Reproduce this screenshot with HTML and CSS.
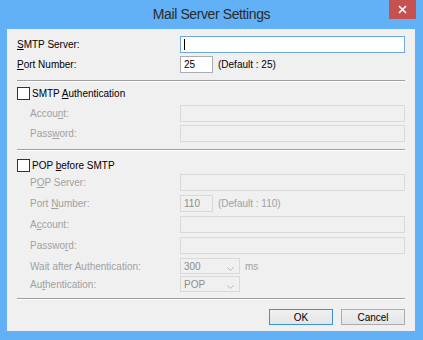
FILE: index.html
```html
<!DOCTYPE html>
<html lang="en">
<head>
    <meta charset="UTF-8">
    <title>Mail Server Settings</title>
    <link rel="stylesheet" href="styles.css">
</head>
<body>
    <div id="window">
        <div class="titlebar">
            <span class="title">Mail Server Settings</span>
            <span class="close">
                <svg width="9" height="9" viewBox="0 0 9 9"><path d="M1 1L8 8M8 1L1 8" stroke="#fff" stroke-width="1.6"/></svg>
            </span>
        </div>

        <div class="client">
            <div class="row first">
                <label><u>S</u>MTP Server:</label>
                <div class="box focus"><span class="caret"></span></div>
            </div>
            <div class="row tight">
                <label><u>P</u>ort Number:</label>
                <div class="inline">
                    <div class="box port">25</div>
                    <span class="hint">(Default : 25)</span>
                </div>
            </div>

            <div class="sep"></div>

            <div class="check-row">
                <span class="checkbox"></span>
                <span>SMTP <u>A</u>uthentication</span>
            </div>
            <div class="row sub after-check">
                <label>Accou<u>n</u>t:</label>
                <div class="box off"></div>
            </div>
            <div class="row sub tight">
                <label>Pass<u>w</u>ord:</label>
                <div class="box off"></div>
            </div>

            <div class="sep"></div>

            <div class="check-row pop">
                <span class="checkbox"></span>
                <span>POP <u>b</u>efore SMTP</span>
            </div>
            <div class="row sub after-pop">
                <label>P<u>O</u>P Server:</label>
                <div class="box off"></div>
            </div>
            <div class="row sub">
                <label>Port <u>N</u>umber:</label>
                <div class="inline">
                    <div class="box off port">110</div>
                    <span class="hint off-text">(Default : 110)</span>
                </div>
            </div>
            <div class="row sub">
                <label>A<u>c</u>count:</label>
                <div class="box off"></div>
            </div>
            <div class="row sub">
                <label>Passwo<u>r</u>d:</label>
                <div class="box off"></div>
            </div>
            <div class="row sub short">
                <label>Wait after Authentication:</label>
                <div class="inline">
                    <div class="box off select">300
                        <svg class="chev" width="7" height="4" viewBox="0 0 7 4"><path d="M0.5 0.5L3.5 3.5L6.5 0.5" fill="none" stroke="#b5b5b5"/></svg>
                    </div>
                    <span class="hint off-text">ms</span>
                </div>
            </div>
            <div class="row sub short tight2">
                <label>Au<u>t</u>hentication:</label>
                <div class="inline">
                    <div class="box off select">POP
                        <svg class="chev" width="7" height="4" viewBox="0 0 7 4"><path d="M0.5 0.5L3.5 3.5L6.5 0.5" fill="none" stroke="#b5b5b5"/></svg>
                    </div>
                </div>
            </div>

            <div class="sep last"></div>

            <div class="buttons">
                <button class="btn default">OK</button>
                <button class="btn">Cancel</button>
            </div>
        </div>
    </div>
</body>
</html>
```

FILE: styles.css
```css
body {
    margin: 0;
    font-family: 'Liberation Sans', Arial, sans-serif;
    font-size: 10px;
    color: #000;
}

#window {
    width: 423px;
    height: 340px;
    background-color: #62b0f5;
    display: flex;
    flex-direction: column;
}

.titlebar {
    height: 29px;
    position: relative;
    display: flex;
    align-items: center;
    justify-content: center;
}

.title {
    font-size: 14px;
    letter-spacing: -0.4px;
    color: #2b2b2b;
    margin-bottom: 2px;
}

.close {
    position: absolute;
    top: 0;
    right: 7px;
    width: 27px;
    height: 19px;
    background-color: #c75050;
    display: flex;
    align-items: center;
    justify-content: center;
}

.client {
    flex: 1;
    margin: 0 8px 9px 7px;
    padding: 7px 10px 0 10px;
    background-color: #f0f0f0;
}

.row {
    display: grid;
    grid-template-columns: 163px 1fr;
    align-items: center;
    height: 17px;
    margin-top: 4px;
}

.row.first { margin-top: 0; }
.row.tight { margin-top: 3px; }
.row.tight2 { margin-top: 2px; }
.row.after-check { margin-top: 5px; }
.row.after-pop { margin-top: 2px; }
.row.short { height: 16px; }

.row.sub label {
    padding-left: 13px;
    color: #a0a0a0;
}

.box {
    height: 17px;
    box-sizing: border-box;
    border: 1px solid #abadb3;
    background-color: #fff;
    padding-left: 3px;
    display: flex;
    align-items: center;
    position: relative;
}

.row.short .box { height: 16px; }

.box.focus {
    border-color: #6fa8de;
}

.caret {
    width: 1px;
    height: 11px;
    background-color: #000;
}

.box.off {
    border-color: #d9d9d9;
    background-color: #f0f0f0;
    color: #8d8d8d;
}

.inline {
    display: flex;
    align-items: center;
}

.port {
    width: 33px;
}

.select {
    width: 60px;
}

.chev {
    position: absolute;
    right: 5px;
    top: 8px;
}

.hint {
    margin-left: 5px;
}

.off-text {
    color: #a0a0a0;
}

.sep {
    margin-top: 7px;
    border-top: 1px solid #a0a0a0;
    border-bottom: 1px solid #fff;
}

.sep.last {
    margin-top: 6px;
}

.check-row {
    display: flex;
    align-items: center;
    gap: 2px;
    height: 13px;
    margin-top: 5px;
}

.check-row.pop {
    margin-top: 8px;
}

.checkbox {
    width: 13px;
    height: 13px;
    box-sizing: border-box;
    border: 1px solid #333;
    background-color: #fff;
}

.buttons {
    display: flex;
    justify-content: flex-end;
    gap: 8px;
    margin-top: 9px;
}

.btn {
    width: 64px;
    height: 16px;
    padding: 0;
    font-family: 'Liberation Sans', Arial, sans-serif;
    font-size: 10px;
    color: #000;
    background: linear-gradient(#f0f0f0, #e5e5e5);
    border: 1px solid #acacac;
}

.btn.default {
    border-color: #3c8fd9;
}
```
